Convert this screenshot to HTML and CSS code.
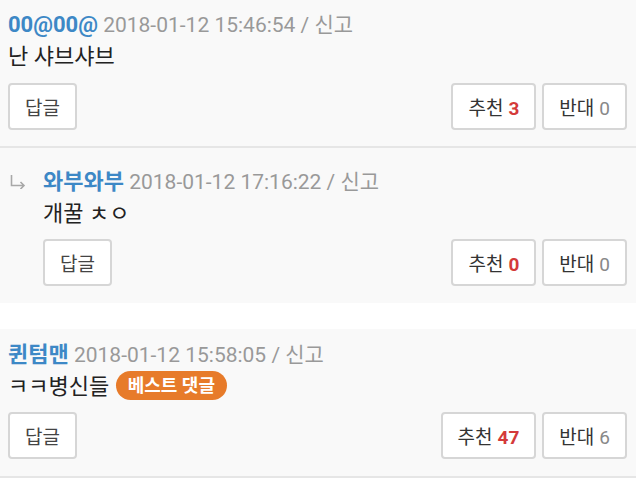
FILE: index.html
```html
<!DOCTYPE html>
<html lang="ko">
<head>
    <meta charset="UTF-8">
    <title>댓글</title>
    <link rel="stylesheet" href="styles.css">
</head>
<body>
<ul class="cmtlist">
    <li class="cmt first">
        <div class="cmt_head">
            <span class="nick">00@00@</span>
            <span class="date">2018-01-12 15:46:54 / 신고</span>
        </div>
        <div class="cmt_body">난 샤브샤브</div>
        <div class="cmt_btns">
            <button class="btn reply">답글</button>
            <div class="votes">
                <button class="btn">추천<b class="up">3</b></button>
                <button class="btn">반대<span class="down">0</span></button>
            </div>
        </div>
    </li>
    <li class="cmt sub">
        <span class="arrow">
            <svg width="16" height="14" viewBox="0 0 16 14">
                <path d="M1.5 0 V10.5 H14 M10.5 7 L14 10.5 L10.5 14" fill="none" stroke="#a8a8a8" stroke-width="1.6"/>
            </svg>
        </span>
        <div class="sub_inner">
            <div class="cmt_head">
                <span class="nick">와부와부</span>
                <span class="date">2018-01-12 17:16:22 / 신고</span>
            </div>
            <div class="cmt_body">개꿀 ㅊㅇ</div>
            <div class="cmt_btns">
                <button class="btn reply">답글</button>
                <div class="votes">
                    <button class="btn">추천<b class="up">0</b></button>
                    <button class="btn">반대<span class="down">0</span></button>
                </div>
            </div>
        </div>
    </li>
    <li class="cmt best">
        <div class="cmt_head">
            <span class="nick">퀸텀맨</span>
            <span class="date">2018-01-12 15:58:05 / 신고</span>
        </div>
        <div class="cmt_body">ㅋㅋ병신들 <span class="badge">베스트 댓글</span></div>
        <div class="cmt_btns">
            <button class="btn reply">답글</button>
            <div class="votes">
                <button class="btn">추천<b class="up">47</b></button>
                <button class="btn">반대<span class="down">6</span></button>
            </div>
        </div>
    </li>
</ul>
</body>
</html>
```

FILE: styles.css
```css
body {
    margin: 0;
    background-color: #ffffff;
    font-family: Roboto, "Noto Sans CJK KR", sans-serif;
    color: #222222;
}

.cmtlist {
    list-style: none;
    margin: 0;
    padding: 0;
}

.cmt {
    background-color: #f9f9f9;
    padding: 9px 9px 16px 8px;
    border-bottom: 2px solid #e6e6e6;
}

.cmt.sub {
    display: flex;
    padding: 18px 9px 17px 8px;
    border-bottom: none;
}

.cmt.best {
    margin-top: 26px;
    padding: 10px 9px 17px 8px;
}

.arrow {
    width: 33px;
    padding-left: 2px;
    padding-top: 8px;
}

.sub_inner {
    flex: 1;
}

.cmt_head {
    font-size: 21px;
    line-height: 32px;
    white-space: nowrap;
}

.nick {
    color: #3d88c6;
    font-size: 22px;
    font-weight: bold;
}

.date {
    color: #999999;
}

.cmt_body {
    font-size: 22px;
    line-height: 32px;
}

.badge {
    display: inline-block;
    margin-left: 1px;
    padding: 0 12px;
    border-radius: 15px;
    background-color: #e77b2a;
    color: #ffffff;
    font-size: 18px;
    font-weight: bold;
    line-height: 29px;
    vertical-align: 2px;
}

.cmt_btns {
    display: flex;
    justify-content: space-between;
    margin-top: 10px;
}

.best .cmt_btns,
.sub .cmt_btns {
    margin-top: 9px;
}

.votes {
    display: flex;
    gap: 6px;
}

.btn {
    height: 47px;
    padding: 0 15px;
    border: 2px solid #d6d6d6;
    border-radius: 4px;
    background-color: #ffffff;
    color: #333333;
    font-family: Roboto, "Noto Sans CJK KR", sans-serif;
    font-size: 19px;
}

.btn.reply {
    width: 69px;
    padding: 0;
    color: #444444;
}

.up {
    margin-left: 5px;
    color: #d43a3a;
}

.down {
    margin-left: 5px;
    color: #888888;
}
```
